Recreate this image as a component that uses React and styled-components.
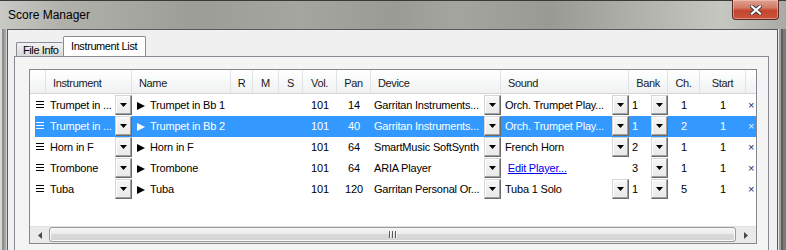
import styled, { createGlobalStyle } from "styled-components";

const GlobalStyle = createGlobalStyle`
  html, body { margin: 0; padding: 0; background: #f0f0f0; }
  body { font-family: "Liberation Sans", Arial, sans-serif; }
`;

const HEAD_COLS = "16px 86px 99px 22px 26px 24px 34px 34px 130px 128px 39px 32px 46px 10px";
const ROW_COLS = "11px 86px 99px 22px 26px 24px 34px 34px 130px 128px 39px 32px 46px 10px";

const Window = styled.div`
  width: 786px;
  height: 250px;
  overflow: hidden;
  display: flex;
  flex-direction: column;
  background: linear-gradient(90deg, #c9c9c5 0%, #b1b1ac 8%, #9d9d98 25%, #a6a6a0 38%, #9b9b96 50%, #a5a5a0 58%, #9a9a95 70%, #b9b9b4 85%, #c7c7c2 92%, #a9a9a5 100%);
`;

const TitleBar = styled.div`
  height: 28px;
  border-top: 1px solid #3a3a3a;
  display: flex;
  align-items: flex-start;
  padding-left: 8px;
`;

const TitleText = styled.div`
  font-size: 12px;
  line-height: 28px;
  color: #000;
`;

const CloseButton = styled.div`
  margin-left: auto;
  margin-right: 7px;
  margin-top: -1px;
  width: 45px;
  height: 19px;
  border: 1px solid #5e2b21;
  border-top: none;
  border-radius: 0 0 4px 4px;
  background: linear-gradient(#dfa293 0%, #d27a66 40%, #c4462f 55%, #c8533a 100%);
  box-shadow: inset 0 0 0 1px rgba(255, 210, 200, 0.45);
  display: flex;
  align-items: center;
  justify-content: center;
`;

const Body = styled.div`
  flex: 1;
  display: flex;
`;

const LeftFrame = styled.div`
  width: 7px;
  background: linear-gradient(90deg, #d6d6d6 0 2px, #8e8e8e 2px 4px, #a5a5a5 4px 6px, #d2d2d2 6px 7px);
`;

const RightFrame = styled.div`
  width: 8px;
  background: linear-gradient(90deg, #e6e6e6 0 1px, #a0a0a0 1px 3px, #5e5e5e 3px 5px, #7a7a7a 5px 8px);
`;

const Client = styled.div`
  flex: 1;
  background: #f0f0f0;
  border: 1px solid #5a5a5a;
  border-bottom: none;
  padding: 7px 8px 0 6px;
  display: flex;
  flex-direction: column;
`;

const TabStrip = styled.div`
  display: flex;
  align-items: flex-end;
  height: 20px;
  padding-left: 2px;
  margin-bottom: -1px;
`;

const Tab = styled.div`
  box-sizing: border-box;
  height: ${(p) => (p.$active ? "21px" : "15px")};
  width: ${(p) => (p.$active ? "83px" : "47px")};
  border: 1px solid #898c95;
  border-bottom: none;
  border-left: ${(p) => (p.$active ? "1px solid #898c95" : "1px solid #898c95")};
  border-right: ${(p) => (p.$active ? "1px solid #898c95" : "none")};
  border-radius: 2px 2px 0 0;
  background: ${(p) => (p.$active ? "#ffffff" : "linear-gradient(#f3f3f3, #e4e4e4 50%, #d6d6d6)")};
  font-size: 11px;
  letter-spacing: -0.4px;
  color: #000;
  padding-left: ${(p) => (p.$active ? "7px" : "6px")};
  line-height: ${(p) => (p.$active ? "19px" : "15px")};
  white-space: nowrap;
`;

const Panel = styled.div`
  flex: 1;
  background: #f4f4f4;
  border: 1px solid #898c95;
  border-bottom: none;
  padding: 12px 11px 0 14px;
`;

const Grid = styled.div`
  width: 726px;
  height: 173px;
  border: 1px solid #828790;
  background: #fff;
  display: flex;
  flex-direction: column;
`;

const HeaderRow = styled.div`
  display: grid;
  grid-template-columns: ${HEAD_COLS};
  height: 23px;
  border-bottom: 1px solid #d5d5d5;
  background: linear-gradient(#ffffff, #f6f7f8 60%, #eff0f2);
`;

const HeaderCell = styled.div`
  border-right: ${(p) => (p.$last ? "none" : "1px solid #e2e3e5")};
  font-size: 11px;
  letter-spacing: -0.35px;
  color: #1a1a1a;
  padding-top: 3px;
  line-height: 20px;
  padding-left: ${(p) => (p.$center ? 0 : 7)}px;
  text-align: ${(p) => (p.$center ? "center" : "left")};
  white-space: nowrap;
  overflow: hidden;
`;

const Rows = styled.div`
  flex: 1;
  padding-top: 1px;
`;

const Row = styled.div`
  display: grid;
  grid-template-columns: ${ROW_COLS};
  margin-left: 5px;
  height: 21px;
  line-height: 21px;
  font-size: 11px;
  letter-spacing: -0.2px;
  background: ${(p) => (p.$selected ? "#3399ff" : "transparent")};
  color: ${(p) => (p.$selected ? "#fff" : "#000")};
`;

const Cell = styled.div`
  display: flex;
  align-items: ${(p) => (p.$top ? "flex-start" : "center")};
  justify-content: ${(p) => (p.$center ? "center" : "flex-start")};
  padding-left: ${(p) => p.$pad || 0}px;
  padding-top: ${(p) => (p.$top ? 6 : 0)}px;
  gap: ${(p) => p.$gap || 0}px;
  white-space: nowrap;
  overflow: hidden;
`;

const ComboCell = styled.div`
  display: flex;
  justify-content: space-between;
  padding-left: ${(p) => p.$pad || 4}px;
  white-space: nowrap;
  overflow: hidden;
`;

const ComboButton = styled.div`
  box-sizing: border-box;
  width: 17px;
  height: 20px;
  flex: none;
  border: 1px solid;
  border-color: #d6d6d6 #6a6a6a #6a6a6a #d6d6d6;
  background: linear-gradient(#f6f6f6, #e9e9e9);
  box-shadow: inset -1px -1px #a0a0a0, inset 1px 1px #ffffff;
  display: flex;
  align-items: center;
  justify-content: center;
`;

const Link = styled.span`
  color: #0000ee;
  text-decoration: underline;
`;

const Remove = styled.span`
  font-size: 11px;
  color: ${(p) => (p.$selected ? "#e8f2ff" : "#1c2c70")};
  width: 100%;
  text-align: center;
`;

const ScrollBar = styled.div`
  height: 17px;
  display: flex;
  background: #eaeaea;
  border-top: 1px solid #e2e2e2;
  box-sizing: border-box;
`;

const ScrollArrow = styled.div`
  width: ${(p) => p.$w}px;
  display: flex;
  align-items: center;
  justify-content: center;
`;

const Thumb = styled.div`
  flex: 1;
  margin: 0 0 1px;
  border: 1px solid #999;
  border-radius: 3px;
  background: linear-gradient(#f4f4f4, #ebebeb 45%, #d9d9d9 50%, #d3d3d3 100%);
  box-shadow: inset 0 0 0 1px #f9f9f9;
  display: flex;
  align-items: center;
  justify-content: center;
`;

const CloseGlyph = () => (
  <svg width="12" height="10" viewBox="0 0 12 10">
    <path d="M2 1.5 L10 8.5 M10 1.5 L2 8.5" stroke="#3b3b3b" strokeWidth="4" strokeLinecap="square" />
    <path d="M2 1.5 L10 8.5 M10 1.5 L2 8.5" stroke="#ffffff" strokeWidth="2.2" strokeLinecap="square" />
  </svg>
);

const HandleIcon = () => (
  <svg width="9" height="7" viewBox="0 0 9 7">
    <path d="M0 0.5h8M0 3.5h8M0 6.5h8" stroke="currentColor" strokeWidth="1" />
  </svg>
);

const PlayIcon = () => (
  <svg width="8" height="8" viewBox="0 0 8 8">
    <polygon points="0,0 8,4 0,8" fill="currentColor" />
  </svg>
);

const DownArrow = () => (
  <svg width="7" height="4" viewBox="0 0 7 4">
    <polygon points="0,0 7,0 3.5,4" fill="#000" />
  </svg>
);

const SideArrow = ({ dir }) => (
  <svg width="4" height="7" viewBox="0 0 4 7">
    <polygon points={dir === "left" ? "4,0 0,3.5 4,7" : "0,0 4,3.5 0,7"} fill="#4a4a4a" />
  </svg>
);

const Grip = () => (
  <svg width="8" height="7" viewBox="0 0 8 7">
    <path d="M0.5 0v7M3.5 0v7M6.5 0v7" stroke="#5a5a5a" strokeWidth="1" />
    <path d="M1.5 0v7M4.5 0v7M7.5 0v7" stroke="#f4f4f4" strokeWidth="1" />
  </svg>
);

const headers = [
  { label: "" },
  { label: "Instrument" },
  { label: "Name" },
  { label: "R", center: true },
  { label: "M", center: true },
  { label: "S", center: true },
  { label: "Vol.", center: true },
  { label: "Pan", center: true },
  { label: "Device" },
  { label: "Sound" },
  { label: "Bank", center: true },
  { label: "Ch.", center: true },
  { label: "Start", center: true },
  { label: "", last: true },
];

const instruments = [
  { inst: "Trumpet in ...", name: "Trumpet in Bb 1", vol: 101, pan: 14, device: "Garritan Instruments...", sound: "Orch. Trumpet Play...", bank: 1, ch: 1, start: 1 },
  { inst: "Trumpet in ...", name: "Trumpet in Bb 2", vol: 101, pan: 40, device: "Garritan Instruments...", sound: "Orch. Trumpet Play...", bank: 1, ch: 2, start: 1, selected: true },
  { inst: "Horn in F", name: "Horn in F", vol: 101, pan: 64, device: "SmartMusic SoftSynth", sound: "French Horn", bank: 2, ch: 1, start: 1 },
  { inst: "Trombone", name: "Trombone", vol: 101, pan: 64, device: "ARIA Player", sound: null, bank: 3, ch: 1, start: 1 },
  { inst: "Tuba", name: "Tuba", vol: 101, pan: 120, device: "Garritan Personal Or...", sound: "Tuba 1 Solo", bank: 1, ch: 5, start: 1 },
];

const App = () => {
  return (
    <Window>
      <GlobalStyle />
      <TitleBar>
        <TitleText>Score Manager</TitleText>
        <CloseButton>
          <CloseGlyph />
        </CloseButton>
      </TitleBar>
      <Body>
        <LeftFrame />
        <Client>
          <TabStrip>
            <Tab>File Info</Tab>
            <Tab $active>Instrument List</Tab>
          </TabStrip>
          <Panel>
            <Grid>
              <HeaderRow>
                {headers.map((h, i) => (
                  <HeaderCell key={i} $center={h.center} $last={h.last}>{h.label}</HeaderCell>
                ))}
              </HeaderRow>
              <Rows>
                {instruments.map((r, i) => (
                  <Row key={i} $selected={r.selected}>
                    <Cell $top $pad={1}><HandleIcon /></Cell>
                    <ComboCell $pad={4}>
                      <span>{r.inst}</span>
                      <ComboButton><DownArrow /></ComboButton>
                    </ComboCell>
                    <Cell $pad={5} $gap={5}><PlayIcon /><span>{r.name}</span></Cell>
                    <Cell />
                    <Cell />
                    <Cell />
                    <Cell $center>{r.vol}</Cell>
                    <Cell $center>{r.pan}</Cell>
                    <ComboCell $pad={3}>
                      <span>{r.device}</span>
                      <ComboButton><DownArrow /></ComboButton>
                    </ComboCell>
                    {r.sound ? (
                      <ComboCell $pad={4}>
                        <span>{r.sound}</span>
                        <ComboButton><DownArrow /></ComboButton>
                      </ComboCell>
                    ) : (
                      <Cell $pad={4}><span>&nbsp;<Link>Edit Player...</Link></span></Cell>
                    )}
                    <ComboCell $pad={3}>
                      <span>{r.bank}</span>
                      <ComboButton><DownArrow /></ComboButton>
                    </ComboCell>
                    <Cell $center>{r.ch}</Cell>
                    <Cell $center>{r.start}</Cell>
                    <Cell><Remove $selected={r.selected}>×</Remove></Cell>
                  </Row>
                ))}
              </Rows>
              <ScrollBar>
                <ScrollArrow $w={19}><SideArrow dir="left" /></ScrollArrow>
                <Thumb><Grip /></Thumb>
                <ScrollArrow $w={20}><SideArrow dir="right" /></ScrollArrow>
              </ScrollBar>
            </Grid>
          </Panel>
        </Client>
        <RightFrame />
      </Body>
    </Window>
  );
};

export default App;
